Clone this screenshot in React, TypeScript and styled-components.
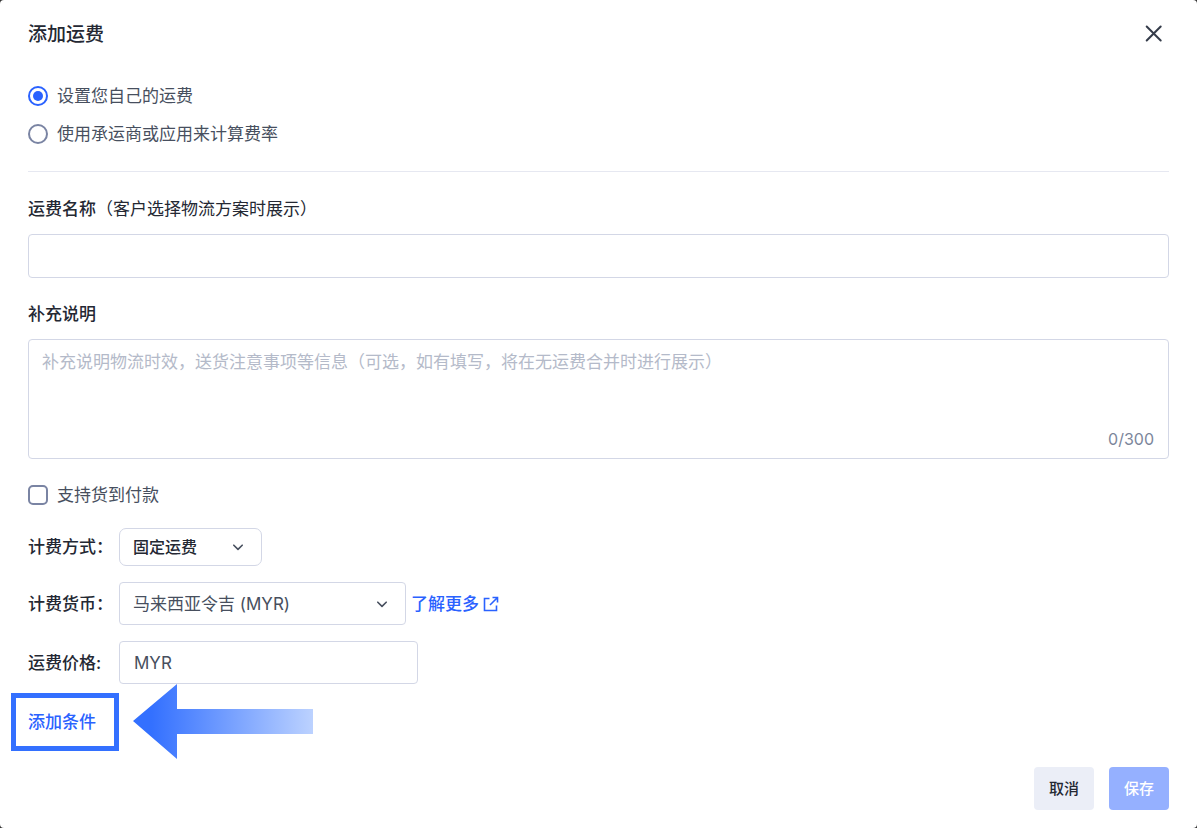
import React, { useState } from "react";
import styled, { createGlobalStyle, css } from "styled-components";

const GlobalStyle = createGlobalStyle`
  *, *::before, *::after { box-sizing: border-box; }
  body {
    margin: 0;
    background: #333;
    color: #242833;
    font-family: Inter, "Noto Sans CJK SC", sans-serif;
    font-size: 17px;
    line-height: 24px;
  }
  button, input, select, textarea { font: inherit; color: inherit; margin: 0; }
`;

const Dialog = styled.form`
  display: flex;
  flex-direction: column;
  min-height: 100vh;
  padding: 21px 28px 18px;
  background: #fff;
  border-radius: 4px;
`;

const Header = styled.header`
  display: flex;
  align-items: center;
  justify-content: space-between;
  height: 28px;
`;

const Title = styled.h1`
  margin: 0;
  font-size: 19px;
  font-weight: 500;
  line-height: 28px;
`;

const CloseButton = styled.button`
  display: flex;
  padding: 3px;
  border: 0;
  background: none;
  color: #353c4a;
  cursor: pointer;
`;

const RadioGroup = styled.div`
  display: flex;
  flex-direction: column;
  gap: 14px;
  padding: 35px 0 25px;
  border-bottom: 1px solid #e6e8f1;
`;

const Choice = styled.label`
  display: flex;
  align-items: center;
  gap: 9px;
  color: #474f5e;
  cursor: pointer;
`;

const controlMark = css`
  appearance: none;
  flex: none;
  width: 20px;
  height: 20px;
  border: 2px solid #7a84a3;
  background: #fff;
  cursor: pointer;
`;

const Radio = styled.input.attrs({ type: "radio" })`
  ${controlMark}
  display: grid;
  place-items: center;
  border-radius: 50%;

  &:checked {
    border-color: #2a62ff;
  }
  &:checked::before {
    content: "";
    width: 10px;
    height: 10px;
    border-radius: 50%;
    background: #2a62ff;
  }
`;

const Checkbox = styled.input.attrs({ type: "checkbox" })`
  ${controlMark}
  border-radius: 5px;

  &:checked {
    background: #2a62ff;
    border-color: #2a62ff;
  }
`;

const Field = styled.div<{ $top: number }>`
  display: flex;
  flex-direction: column;
  gap: 13px;
  margin-top: ${(p) => p.$top}px;
`;

const FieldLabel = styled.label`
  font-weight: 500;
`;

const Note = styled.span`
  font-weight: 400;
`;

const box = css`
  border: 1px solid #d3d7e6;
  border-radius: 4px;
  background: #fff;
  color: #474f5e;
  outline: none;

  &:focus { border-color: #2a62ff; }
`;

const TextInput = styled.input`
  ${box}
  width: 100%;
  height: 44px;
  padding: 0 14px;
`;

const AreaWrap = styled.div`
  position: relative;
  display: flex;
`;

const TextArea = styled.textarea`
  ${box}
  width: 100%;
  height: 120px;
  padding: 10px 13px;
  resize: none;

  &::placeholder { color: #b4bac9; opacity: 1; }
`;

const Counter = styled.span`
  position: absolute;
  right: 15px;
  bottom: 8px;
  color: #7c869b;
  font-size: 16px;
`;

const CodRow = styled.div`
  display: flex;
  margin: 24px 0 21px;
`;

const Rows = styled.div`
  display: flex;
  flex-direction: column;
  gap: 16px;
`;

const Row = styled.div`
  display: grid;
  grid-template-columns: 91px auto auto;
  align-items: center;
  justify-content: start;
`;

const SelectWrap = styled.div<{ $width: number }>`
  position: relative;
  width: ${(p) => p.$width}px;

  svg {
    position: absolute;
    top: 50%;
    right: 18px;
    transform: translateY(-50%);
    pointer-events: none;
  }
`;

const Select = styled.select<{ $compact?: boolean }>`
  ${box}
  appearance: none;
  display: block;
  width: 100%;
  height: ${(p) => (p.$compact ? 38 : 43)}px;
  padding: 0 40px 0 13px;
  cursor: pointer;
  ${(p) =>
    p.$compact &&
    css`
      border-radius: 7px;
      color: #242833;
      font-size: 16px;
      font-weight: 500;
    `}
`;

const LearnMore = styled.a`
  display: flex;
  align-items: center;
  gap: 4px;
  margin-left: 5px;
  color: #2a62ff;
  font-weight: 500;
  text-decoration: none;
`;

const PriceBox = styled.div`
  ${box}
  display: flex;
  align-items: center;
  gap: 8px;
  width: 299px;
  height: 43px;
  padding: 0 14px;
`;

const PriceInput = styled.input`
  flex: 1;
  min-width: 0;
  border: 0;
  padding: 0;
  outline: none;
  background: none;
`;

const AddConditionArea = styled.div`
  position: relative;
  display: flex;
  align-self: flex-start;
  margin-top: 26px;
`;

const AddCondition = styled.button`
  padding: 0;
  border: 0;
  background: none;
  color: #2a62ff;
  font-weight: 500;
  cursor: pointer;
`;

const Highlight = styled.span`
  position: absolute;
  top: -17px;
  left: -17px;
  width: 108px;
  height: 58px;
  border: 5px solid #3370ff;
  pointer-events: none;
`;

const Arrow = styled.svg`
  position: absolute;
  top: -26px;
  left: 105px;
  pointer-events: none;
`;

const Footer = styled.footer`
  display: flex;
  justify-content: flex-end;
  gap: 15px;
  margin-top: auto;
  padding-top: 16px;
`;

const ActionButton = styled.button<{ $primary?: boolean }>`
  width: 60px;
  height: 43px;
  padding: 0;
  border: 0;
  border-radius: 4px;
  background: ${(p) => (p.$primary ? "#95b0ff" : "#ebeef7")};
  color: ${(p) => (p.$primary ? "#fff" : "#242833")};
  font-size: 15px;
  font-weight: 500;
  cursor: pointer;
`;

const Chevron = () => (
  <svg width="12" height="12" viewBox="0 0 12 12" fill="none" stroke="#474f5e" strokeWidth="1.6" strokeLinecap="round" strokeLinejoin="round" aria-hidden="true">
    <path d="M1.8 4.2 6 8.4l4.2-4.2" />
  </svg>
);

export default function App() {
  const [mode, setMode] = useState("custom");
  const [note, setNote] = useState("");

  return (
    <>
      <GlobalStyle />
      <Dialog onSubmit={(e) => e.preventDefault()}>
        <Header>
          <Title>添加运费</Title>
          <CloseButton type="button" aria-label="关闭">
            <svg width="24" height="24" viewBox="0 0 24 24" fill="none" stroke="currentColor" strokeWidth="2" strokeLinecap="round" aria-hidden="true">
              <path d="M4.7 3.5 18.7 17.5M18.7 3.5 4.7 17.5" />
            </svg>
          </CloseButton>
        </Header>

        <RadioGroup role="radiogroup" aria-label="运费类型">
          <Choice>
            <Radio name="mode" checked={mode === "custom"} onChange={() => setMode("custom")} />
            设置您自己的运费
          </Choice>
          <Choice>
            <Radio name="mode" checked={mode === "carrier"} onChange={() => setMode("carrier")} />
            使用承运商或应用来计算费率
          </Choice>
        </RadioGroup>

        <Field $top={25}>
          <FieldLabel htmlFor="rate-name">
            运费名称<Note>（客户选择物流方案时展示）</Note>
          </FieldLabel>
          <TextInput id="rate-name" type="text" />
        </Field>

        <Field $top={24}>
          <FieldLabel htmlFor="rate-note">补充说明</FieldLabel>
          <AreaWrap>
            <TextArea
              id="rate-note"
              maxLength={300}
              value={note}
              onChange={(e) => setNote(e.target.value)}
              placeholder="补充说明物流时效，送货注意事项等信息（可选，如有填写，将在无运费合并时进行展示）"
            />
            <Counter>{note.length}/300</Counter>
          </AreaWrap>
        </Field>

        <CodRow>
          <Choice>
            <Checkbox />
            支持货到付款
          </Choice>
        </CodRow>

        <Rows>
          <Row>
            <FieldLabel htmlFor="billing">计费方式：</FieldLabel>
            <SelectWrap $width={143}>
              <Select id="billing" $compact>
                <option>固定运费</option>
              </Select>
              <Chevron />
            </SelectWrap>
          </Row>
          <Row>
            <FieldLabel htmlFor="currency">计费货币：</FieldLabel>
            <SelectWrap $width={287}>
              <Select id="currency">
                <option>马来西亚令吉 (MYR)</option>
              </Select>
              <Chevron />
            </SelectWrap>
            <LearnMore href="#currency">
              了解更多
              <svg width="16" height="16" viewBox="0 0 16 16" fill="none" stroke="currentColor" strokeWidth="1.6" aria-hidden="true">
                <path d="M6.5 2.5H1.5V14.5H13.5V9.5M9.5 1.5H14.5V6.5M14.3 1.7 7 9" />
              </svg>
            </LearnMore>
          </Row>
          <Row>
            <FieldLabel htmlFor="price">运费价格:</FieldLabel>
            <PriceBox>
              <span>MYR</span>
              <PriceInput id="price" type="text" inputMode="decimal" />
            </PriceBox>
          </Row>
        </Rows>

        <AddConditionArea>
          <AddCondition type="button">添加条件</AddCondition>
          <Highlight />
          <Arrow width="180" height="75" viewBox="0 0 180 75" aria-hidden="true">
            <defs>
              <linearGradient id="arrow-fill" x1="0" x2="1" y1="0" y2="0">
                <stop offset="0" stopColor="#3370ff" />
                <stop offset="0.1" stopColor="#3370ff" />
                <stop offset="1" stopColor="#bcd2ff" />
              </linearGradient>
            </defs>
            <path d="M0 37 44 0V25H180V50H44V75Z" fill="url(#arrow-fill)" />
          </Arrow>
        </AddConditionArea>

        <Footer>
          <ActionButton type="button">取消</ActionButton>
          <ActionButton type="submit" $primary>保存</ActionButton>
        </Footer>
      </Dialog>
    </>
  );
}
